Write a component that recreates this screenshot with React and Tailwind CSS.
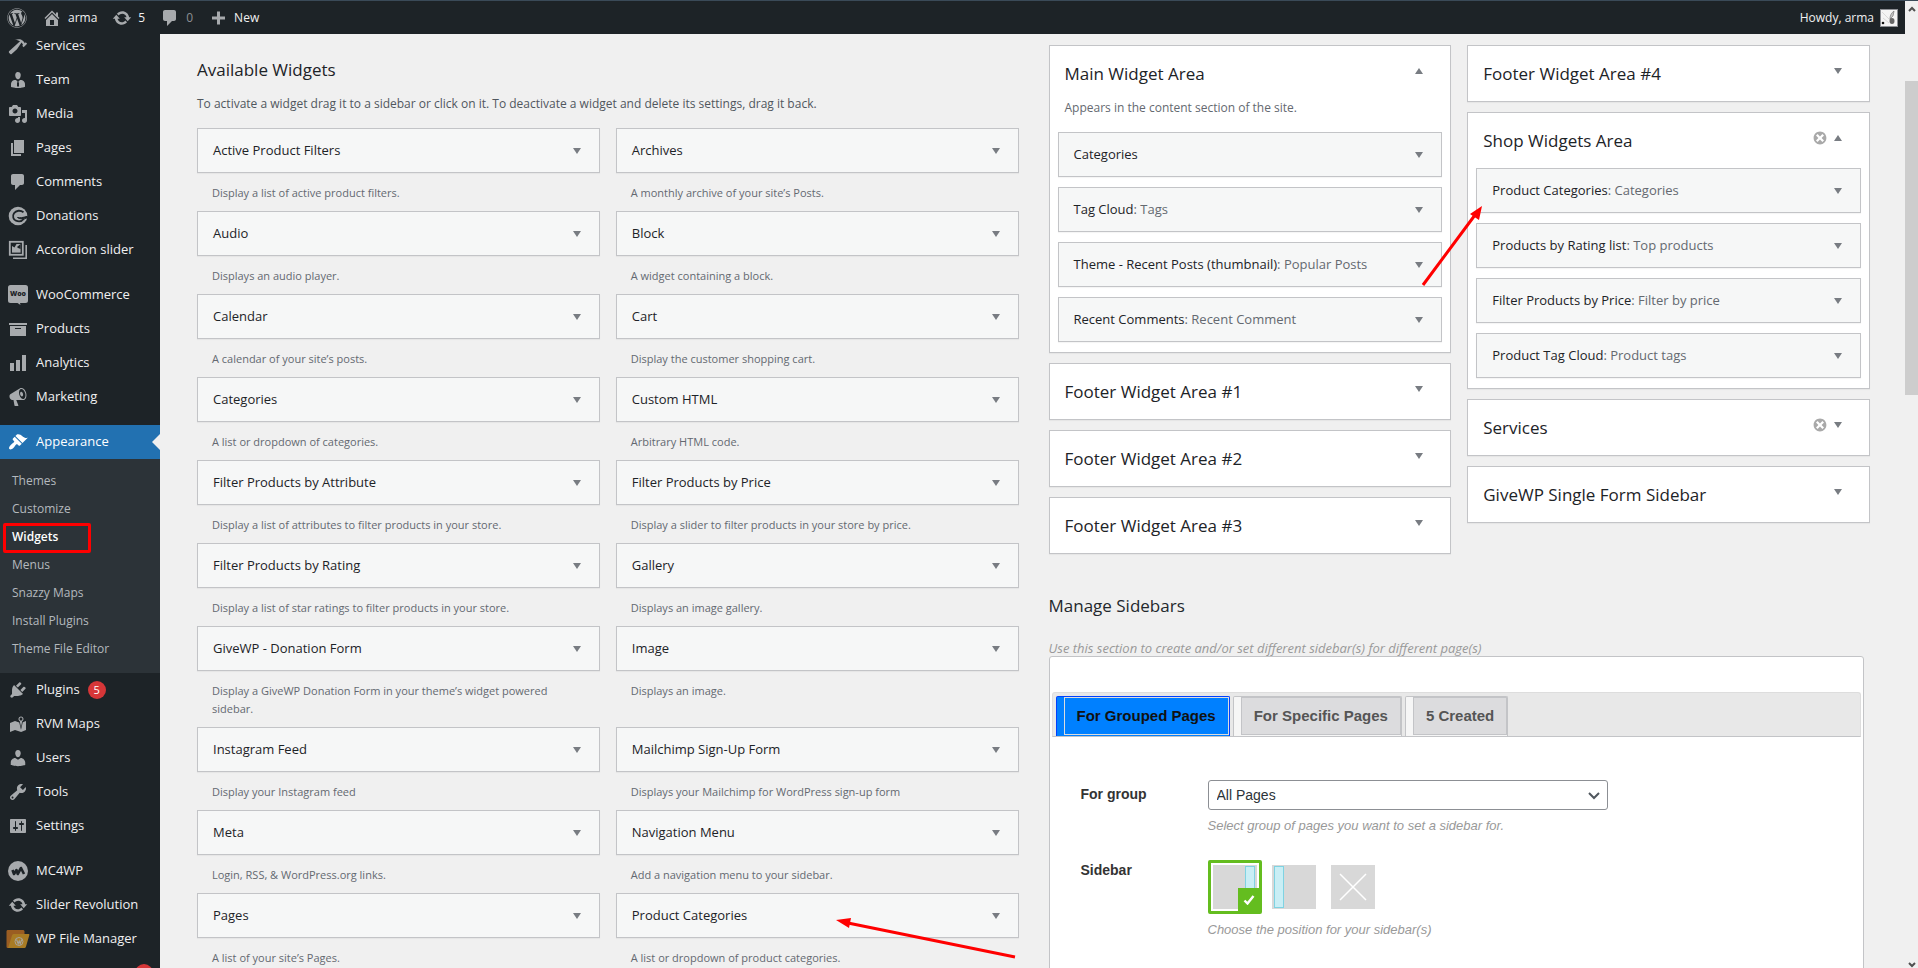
import { FaWordpress } from 'react-icons/fa';

// 20x20 icon shapes used by the admin menu and toolbar
const ICONS = {
  home: 'M16 8.5l1.53 1.53-1.06 1.06L10 4.6l-6.47 6.49-1.06-1.06L10 2.5l4 4v-2h2v4zm-6-2.46l6 5.99V18H4v-5.97zM12 17v-5H8v5h4z',
  update: 'M10.2 3.28c3.53 0 6.43 2.61 6.92 6h2.08l-3.5 4-3.5-4h2.32c-.45-1.97-2.21-3.45-4.32-3.45-1.45 0-2.73.71-3.54 1.78L4.95 5.66C6.23 4.2 8.11 3.28 10.2 3.28zm-.4 13.44c-3.52 0-6.43-2.61-6.92-6H.8l3.5-4c1.17 1.33 2.33 2.67 3.5 4H5.48c.45 1.97 2.21 3.45 4.32 3.45 1.45 0 2.73-.71 3.54-1.78l1.71 1.95c-1.28 1.46-3.15 2.38-5.25 2.38z',
  comments: 'M5 2h9c1.1 0 2 .9 2 2v7c0 1.1-.9 2-2 2h-2l-5 5v-5H5c-1.1 0-2-.9-2-2V4c0-1.1.9-2 2-2z',
  plus: 'M17 8.5v3h-5v5H9v-5H4v-3h5v-5h3v5h5z',
  hammer: 'M17.7 6.32l1.41 1.42-3.47 3.41-1.42-1.42.84-.82c-.32-.76-.81-1.57-1.51-2.31l-4.61 6.59-5.26 4.7c-.39.39-1.02.39-1.42 0l-1.2-1.21c-.39-.39-.39-1.02 0-1.41l10.97-9.92c-1.37-.86-3.21-1.46-5.67-1.48 2.7-.82 4.95-.93 6.58-.3 1.7.66 2.82 2.2 3.91 3.58z',
  businessman: 'M7.3 6l-.03-.19c-.04-.37-.05-.73-.03-1.08.02-.36.1-.71.25-1.04.14-.32.31-.61.52-.86s.49-.46.83-.6c.34-.15.72-.23 1.13-.23.69 0 1.26.2 1.71.59s.76.87.91 1.44.18 1.16.09 1.78l-.03.19c-.01.09-.05.25-.11.48-.05.24-.12.47-.2.69-.08.21-.19.45-.34.72-.14.27-.3.49-.47.69-.18.19-.4.34-.67.48-.27.13-.55.19-.86.19s-.59-.06-.87-.19c-.26-.13-.49-.29-.67-.5-.18-.2-.34-.42-.49-.66-.15-.25-.26-.49-.34-.73-.09-.25-.16-.47-.21-.67-.06-.21-.1-.37-.12-.5zm9.2 6.24c.41.7.5 1.41.5 2.14v2.49c0 .03-.12.08-.29.13-.18.04-.42.13-.97.27-.55.12-1.1.24-1.65.34s-1.19.19-1.95.27c-.75.08-1.46.12-2.13.12-.68 0-1.39-.04-2.14-.12-.75-.07-1.4-.17-1.98-.27-.58-.11-1.08-.23-1.56-.34-.49-.11-.8-.21-1.06-.29L3 16.87v-2.49c0-.75.07-1.46.46-2.15s.81-1.25 1.5-1.68C5.66 10.12 7.19 10 8 10l1.67 1.67L9 13v3l1.02 1.08L11 16v-3l-.68-1.33L11.97 10c.77 0 2.2.07 2.9.52.71.45 1.21 1.02 1.63 1.72z',
  media: 'M13 11V4c0-.55-.45-1-1-1h-1.67L9 1H5L3.67 3H2c-.55 0-1 .45-1 1v7c0 .55.45 1 1 1h10c.55 0 1-.45 1-1zM7 4.5c1.38 0 2.5 1.12 2.5 2.5S8.38 9.5 7 9.5 4.5 8.38 4.5 7 5.62 4.5 7 4.5zM14 6h5v10.5c0 1.38-1.12 2.5-2.5 2.5S14 17.88 14 16.5s1.12-2.5 2.5-2.5c.17 0 .34.02.5.05V9h-3V6zm-4 8.05V13h2v3.5c0 1.38-1.12 2.5-2.5 2.5S7 17.88 7 16.5 8.12 14 9.5 14c.17 0 .34.02.5.05z',
  page: 'M6 15V2h10v13H6zm-1 1h8v2H3V5h2v11z',
  archive: 'M19 4v2H1V4h18zM2 7h16v10H2V7zm11 3V9H7v1h6z',
  chart: 'M18 18V2h-4v16h4zm-6 0V7H8v11h4zm-6 0v-8H2v8h4z',
  megaphone: 'M18.15 5.94c.46 1.62.38 3.22-.02 4.48-.42 1.28-1.26 2.18-2.3 2.48-.16.06-.26.06-.4.06-.06.02-.12.02-.18.02-.06.02-.14.02-.22.02h-6.8l2.22 5.5c.02.14-.06.26-.14.34-.08.1-.24.16-.34.16H6.95c-.1 0-.26-.06-.34-.16-.08-.08-.16-.2-.14-.34l-1-5.5H4.25l-.02-.02c-.5.06-1.08-.18-1.54-.62s-.88-1.08-1.06-1.88c-.24-.8-.2-1.56-.02-2.2.18-.62.58-1.08 1.06-1.3l.02-.02 9-5.4c.1-.06.18-.1.24-.16.06-.04.14-.08.24-.12.16-.08.28-.12.5-.18 1.04-.3 2.24.1 3.22.98s1.84 2.24 2.26 3.86zm-2.58 5.98h-.02c.4-.1.74-.34 1.04-.7.58-.7.86-1.76.86-3.04 0-.64-.1-1.3-.28-1.98-.34-1.36-1.02-2.5-1.78-3.24s-1.68-1.1-2.46-.88c-.82.22-1.4.96-1.7 2-.32 1.04-.28 2.36.06 3.72.38 1.36 1 2.5 1.8 3.24.78.74 1.62 1.1 2.48.88zm-2.54-7.08c.22-.04.42-.02.62.04.38.16.76.48 1.02 1s.42 1.2.42 1.78c0 .3-.04.56-.12.8-.18.48-.44.84-.86.94-.34.1-.8-.06-1.14-.4s-.64-.86-.78-1.5c-.18-.62-.12-1.24.02-1.72s.48-.84.82-.94z',
  appearance: 'M14.48 11.06L7.41 3.99l1.5-1.5c.5-.56 2.3-.47 3.51.32 1.21.8 1.43 1.28 2.91 2.1 1.18.64 2.45 1.26 4.45.85zm-.71.71L6.7 4.7 4.93 6.47c-.39.39-.39 1.02 0 1.41l1.06 1.06c.39.39.39 1.03 0 1.42-.6.6-1.43 1.11-2.21 1.69-.35.26-.7.53-1.01.84C1.43 14.23.4 16.08 1.4 17.07c.99 1 2.84-.03 4.18-1.36.31-.31.58-.66.85-1.02.57-.78 1.08-1.61 1.69-2.21.39-.39 1.02-.39 1.41 0l1.06 1.06c.39.39 1.02.39 1.41 0z',
  plugins: 'M13.11 4.36L9.87 7.6 8 5.73l3.24-3.24c.35-.34 1.05-.2 1.56.32.52.51.66 1.21.31 1.55zm-8 1.77l.91-1.12 9.01 9.01-1.19.84c-.71.71-2.63 1.16-3.82 1.16H6.14L4.9 17.26c-.59.59-1.54.59-2.12 0-.59-.58-.59-1.53 0-2.12l1.24-1.24v-3.88c0-1.13.4-3.19 1.09-3.89zm7.26 3.97l3.24-3.24c.34-.35 1.04-.21 1.55.31.52.51.66 1.21.31 1.55l-3.24 3.25z',
  location: 'M13 13.14l1.17-5.94c.79-.43 1.33-1.25 1.33-2.2 0-1.38-1.12-2.5-2.5-2.5S10.5 3.62 10.5 5c0 .95.54 1.77 1.33 2.2zm0-9.64c.83 0 1.5.67 1.5 1.5s-.67 1.5-1.5 1.5-1.5-.67-1.5-1.5.67-1.5 1.5-1.5zm1.72 4.8L18 6.97v9L13.12 18 7 15.97l-5 2v-9l5-2 4.27 1.41 1.73 7.3z',
  users: 'M10 9.25c-2.27 0-2.73-3.44-2.73-3.44C7 4.02 7.82 2 9.97 2c2.16 0 2.98 2.02 2.71 3.81 0 0-.41 3.44-2.68 3.44zm0 2.57L12.72 10c2.39 0 4.52 2.33 4.52 4.53v2.49s-3.65 1.13-7.24 1.13c-3.65 0-7.24-1.13-7.24-1.13v-2.49c0-2.25 1.94-4.48 4.47-4.48z',
  tools: 'M16.68 9.77c-1.34 1.34-3.3 1.67-4.95.99l-5.41 6.52c-.99.99-2.59.99-3.58 0s-.99-2.59 0-3.57l6.52-5.42c-.68-1.65-.35-3.61.99-4.95 1.28-1.28 3.12-1.62 4.72-1.06l-2.89 2.89 2.82 2.82 2.86-2.87c.53 1.58.18 3.39-1.08 4.65zM3.81 16.21c.4.39 1.04.39 1.43 0 .4-.4.4-1.04 0-1.43-.39-.4-1.03-.4-1.43 0-.39.39-.39 1.03 0 1.43z',
  settings: 'M18 16V4c0-.55-.45-1-1-1H3c-.55 0-1 .45-1 1v12c0 .55.45 1 1 1h14c.55 0 1-.45 1-1zM8 11h1c.55 0 1 .45 1 1s-.45 1-1 1H8v1.5c0 .28-.22.5-.5.5s-.5-.22-.5-.5V13H6c-.55 0-1-.45-1-1s.45-1 1-1h1V5.5c0-.28.22-.5.5-.5s.5.22.5.5V11zm5-2h-1c-.55 0-1-.45-1-1s.45-1 1-1h1V5.5c0-.28.22-.5.5-.5s.5.22.5.5V7h1c.55 0 1 .45 1 1s-.45 1-1 1h-1v5.5c0 .28-.22.5-.5.5s-.5-.22-.5-.5V9z',
  dismiss: 'M10 2c4.42 0 8 3.58 8 8s-3.58 8-8 8-8-3.58-8-8 3.58-8 8-8zm5 11l-3-3 3-3-2-2-3 3-3-3-2 2 3 3-3 3 2 2 3-3 3 3z',
};

function Icon({ name, className }) {
  return (
    <svg viewBox="0 0 20 20" fill="currentColor" aria-hidden="true" className={className}>
      <path d={ICONS[name]} fillRule={name === 'home' ? 'evenodd' : 'nonzero'} />
    </svg>
  );
}

function GiveIcon() {
  return (
    <svg viewBox="0 0 20 20" aria-hidden="true" className="w-5 h-5 shrink-0">
      <circle cx="10" cy="10" r="9.3" fill="currentColor" />
      <path d="M15.5 6.2C12.500 4 8 4.200 6 7.300c-1.900 3-.7 6.200 2 7.400 2.900 1.200 6.200.3 8-2" fill="none" stroke="#1d2327" strokeWidth="1.800" />
      <path d="M9.500 11.500c2.500.6 5 .2 9.700-1.200v1.500c-3.200 1.500-6.800 1.700-9.700-.3z" fill="#1d2327" stroke="#1d2327" />
    </svg>
  );
}

function AccordionIcon() {
  return (
    <svg viewBox="0 0 20 20" aria-hidden="true" className="w-5 h-5 shrink-0">
      <path d="M5 18.200h13.200V5" fill="none" stroke="currentColor" strokeWidth="1.600" />
      <rect x="1.800" y="1.800" width="13" height="13" fill="none" stroke="currentColor" strokeWidth="1.800" />
      <rect x="4" y="4" width="8.600" height="8.600" fill="currentColor" />
      <path d="M4 4h4.500L6.500 7.500 4 6zM9 7l3.600-3v5L10 8z" fill="#1d2327" />
    </svg>
  );
}

function WooIcon() {
  return (
    <svg viewBox="0 0 20 20" aria-hidden="true" className="w-5 h-5 shrink-0">
      <path d="M2.500 0h15A2.500 2.500 0 0 1 20 2.500v13a2.500 2.500 0 0 1-2.500 2.500H12l.5 2-3-2h-7A2.500 2.500 0 0 1 0 15.500v-13A2.500 2.500 0 0 1 2.500 0z" fill="currentColor" />
      <text x="10" y="11" textAnchor="middle" fontSize="7" fontWeight="900" fill="#1d2327">Woo</text>
    </svg>
  );
}

function MailchimpIcon() {
  return (
    <svg viewBox="0 0 20 20" aria-hidden="true" className="w-5 h-5 shrink-0">
      <circle cx="10" cy="10" r="10" fill="currentColor" />
      <path d="M4.500 9l1.500 4 2.500-4 1.200 4L13 7l3 6" fill="none" stroke="#1d2327" strokeWidth="2.600" strokeLinejoin="round" />
    </svg>
  );
}

function FolderIcon() {
  return (
    <span className="flex w-5 justify-center shrink-0">
      <svg viewBox="0 0 23 20" aria-hidden="true" className="w-6 h-5 shrink-0">
        <path d="M0 2.500C0 1.500.5 1 1.500 1H17l1 1v5L8 19H1.500C.5 19 0 18.500 0 17.500z" fill="#9a5d22" />
        <path d="M5.500 6.500C5.800 5.500 6.500 5 7.500 5H22c.8 0 1 .5.800 1.200l-3.300 11.300c-.3 1-1 1.500-2 1.500H1.500z" fill="#a87b24" />
        <circle cx="12.500" cy="12.500" r="4" fill="none" stroke="#a8a49a" strokeWidth="1" />
        <path d="M10 10.500l1.700 4.200 1-2.700 1 2.700 1.500-4.200" fill="none" stroke="#a8a49a" strokeWidth="1.200" />
      </svg>
    </span>
  );
}

const MENU = [
  [
    { label: 'Services', icon: 'hammer' },
    { label: 'Team', icon: 'businessman' },
    { label: 'Media', icon: 'media' },
    { label: 'Pages', icon: 'page' },
    { label: 'Comments', icon: 'comments' },
    { label: 'Donations', Custom: GiveIcon },
    { label: 'Accordion slider', Custom: AccordionIcon },
  ],
  [
    { label: 'WooCommerce', Custom: WooIcon },
    { label: 'Products', icon: 'archive' },
    { label: 'Analytics', icon: 'chart' },
    { label: 'Marketing', icon: 'megaphone' },
  ],
  [
    { label: 'Appearance', icon: 'appearance', active: true },
    { label: 'Plugins', icon: 'plugins', badge: 5 },
    { label: 'RVM Maps', icon: 'location' },
    { label: 'Users', icon: 'users' },
    { label: 'Tools', icon: 'tools' },
    { label: 'Settings', icon: 'settings' },
  ],
  [
    { label: 'MC4WP', Custom: MailchimpIcon },
    { label: 'Slider Revolution', icon: 'update' },
    { label: 'WP File Manager', Custom: FolderIcon },
  ],
];

const SUBMENU = ['Themes', 'Customize', 'Widgets', 'Menus', 'Snazzy Maps', 'Install Plugins', 'Theme File Editor'];

const AVAILABLE = [
  ['Active Product Filters', 'Display a list of active product filters.'],
  ['Archives', 'A monthly archive of your site’s Posts.'],
  ['Audio', 'Displays an audio player.'],
  ['Block', 'A widget containing a block.'],
  ['Calendar', 'A calendar of your site’s posts.'],
  ['Cart', 'Display the customer shopping cart.'],
  ['Categories', 'A list or dropdown of categories.'],
  ['Custom HTML', 'Arbitrary HTML code.'],
  ['Filter Products by Attribute', 'Display a list of attributes to filter products in your store.'],
  ['Filter Products by Price', 'Display a slider to filter products in your store by price.'],
  ['Filter Products by Rating', 'Display a list of star ratings to filter products in your store.'],
  ['Gallery', 'Displays an image gallery.'],
  ['GiveWP - Donation Form', 'Display a GiveWP Donation Form in your theme’s widget powered sidebar.'],
  ['Image', 'Displays an image.'],
  ['Instagram Feed', 'Display your Instagram feed'],
  ['Mailchimp Sign-Up Form', 'Displays your Mailchimp for WordPress sign-up form'],
  ['Meta', 'Login, RSS, & WordPress.org links.'],
  ['Navigation Menu', 'Add a navigation menu to your sidebar.'],
  ['Pages', 'A list of your site’s Pages.'],
  ['Product Categories', 'A list or dropdown of product categories.'],
];

const MAIN_AREA = [
  ['Categories'],
  ['Tag Cloud', 'Tags'],
  ['Theme - Recent Posts (thumbnail)', 'Popular Posts'],
  ['Recent Comments', 'Recent Comment'],
];

const SHOP_AREA = [
  ['Product Categories', 'Categories'],
  ['Products by Rating list', 'Top products'],
  ['Filter Products by Price', 'Filter by price'],
  ['Product Tag Cloud', 'Product tags'],
];

function Caret({ up }) {
  return (
    <svg viewBox="0 0 8 6" aria-hidden="true" className="w-2 h-[6px] shrink-0 fill-[#787c82]">
      <path d={up ? 'M0 6h8L4 0z' : 'M0 0h8L4 6z'} />
    </svg>
  );
}

function AdminBar() {
  return (
    <header className="relative z-10 flex items-center h-[33px] px-[7px] bg-[#1d2327] text-[#f0f0f1] text-xs">
      <a href="#about" aria-label="About WordPress" className="text-[#a7aaad]">
        <FaWordpress className="w-5 h-5" />
      </a>
      <a href="#site" className="flex items-center gap-[6px] ml-[15px]">
        <Icon name="home" className="w-5 h-5 text-[#a7aaad]" />
        arma
      </a>
      <a href="#updates" className="flex items-center gap-[6px] ml-[15px]">
        <Icon name="update" className="w-5 h-5 text-[#a7aaad]" />
        5
      </a>
      <a href="#comments" className="flex items-center gap-[6px] ml-[15px]">
        <Icon name="comments" className="w-5 h-5 text-[#a7aaad]" />
        <span className="text-[#8c8f94]">0</span>
      </a>
      <a href="#new" className="flex items-center gap-[6px] ml-[15px]">
        <Icon name="plus" className="w-5 h-5 text-[#a7aaad]" />
        New
      </a>
      <a href="#profile" className="flex items-center gap-[6px] ml-auto">
        Howdy, arma
        <svg viewBox="0 0 18 18" aria-hidden="true" className="w-[18px] h-[18px]">
          <rect width="18" height="18" fill="#8c8f94" />
          <rect x="1" y="1" width="16" height="16" fill="#f4f4f4" />
          <path d="M2 3l8 8M3 9l6 5" stroke="#d8d8d8" strokeWidth="1" />
          <path d="M14 2c-3 2-4 5-4 8l3-3z" fill="#c5c5c5" stroke="#777" strokeWidth=".7" />
          <ellipse cx="12" cy="12" rx="2.500" ry="3" fill="#666" />
          <circle cx="3" cy="14" r="1.300" fill="#111" />
        </svg>
      </a>
    </header>
  );
}

function MenuItem({ item }) {
  const { label, icon, Custom, badge, active } = item;
  return (
    <li>
      <a
        href="#menu"
        className={`relative flex items-center gap-2 h-[34px] pl-2 text-[13px] ${
          active ? 'bg-[#2271b1] text-white' : 'text-[#f0f0f1]'
        }`}
      >
        <span className={active ? 'text-white' : 'text-[#a7aaad]'}>
          {Custom ? <Custom /> : <Icon name={icon} className="w-5 h-5" />}
        </span>
        {label}
        {badge && (
          <span className="flex items-center justify-center w-[18px] h-[18px] rounded-full bg-[#d63638] text-white text-[11px]">
            {badge}
          </span>
        )}
        {active && (
          <span className="absolute right-0 top-[9px] border-y-8 border-r-8 border-y-transparent border-r-[#f0f0f0]" />
        )}
      </a>
      {active && (
        <ul className="bg-[#2c3338] pt-2 pb-[10px]">
          {SUBMENU.map((name) => (
            <li key={name} className="relative">
              <a
                href="#submenu"
                className={`flex items-center h-7 pl-3 text-xs ${
                  name === 'Widgets' ? 'font-semibold text-white' : 'text-[#b4b9be]'
                }`}
              >
                {name}
              </a>
              {name === 'Widgets' && (
                <span className="absolute left-[3px] top-0 w-[88px] h-[30px] border-[3px] border-[#ff0000] rounded-[2px]" />
              )}
            </li>
          ))}
        </ul>
      )}
    </li>
  );
}

function Sidebar() {
  return (
    <nav className="flex flex-col gap-[11px] w-40 shrink-0 -mt-[5px] bg-[#1d2327]">
      {MENU.map((group, i) => (
        <ul key={i}>
          {group.map((item) => (
            <MenuItem key={item.label} item={item} />
          ))}
          {i === MENU.length - 1 && (
            <li className="flex items-center justify-end h-[34px] pr-[7px]">
              <span className="w-[18px] h-[18px] rounded-full bg-[#d63638]" />
            </li>
          )}
        </ul>
      ))}
    </nav>
  );
}

function WidgetCard({ title, sub }) {
  return (
    <button
      type="button"
      className="flex items-center justify-between w-full h-[45px] pl-[15px] pr-[18px] border border-[#c3c4c7] bg-[#f6f7f7] shadow-[0_1px_1px_rgba(0,0,0,0.04)] text-[13px] text-left text-[#1d2327]"
    >
      <span>
        {title}
        {sub && <span className="text-[#646970]">: {sub}</span>}
      </span>
      <Caret />
    </button>
  );
}

function Area({ title, note, widgets, removable }) {
  return (
    <section className="border border-[#c3c4c7] bg-white shadow-[0_1px_1px_rgba(0,0,0,0.04)]">
      <div className="flex items-center h-[55px] pl-[15px] pr-[27px]">
        <h3 className="text-[17px] text-[#1d2327]">{title}</h3>
        <div className="flex items-center gap-[6px] ml-auto pb-[6px]">
          {removable && (
            <button type="button" aria-label={`Remove ${title}`} className="text-[#a9a9a9]">
              <Icon name="dismiss" className="w-4 h-4" />
            </button>
          )}
          <button type="button" aria-label={`Toggle ${title}`}>
            <Caret up={Boolean(widgets)} />
          </button>
        </div>
      </div>
      {note && <p className="h-[31px] pl-[15px] text-xs leading-[14px] text-[#646970]">{note}</p>}
      {widgets && (
        <div className="flex flex-col gap-[10px] px-2 pb-[10px]">
          {widgets.map(([name, sub]) => (
            <WidgetCard key={name} title={name} sub={sub} />
          ))}
        </div>
      )}
    </section>
  );
}

function Tab({ children, active }) {
  return (
    <li
      className={`flex h-10 pl-[7px] border border-b-0 rounded-t-[2px] ${
        active ? 'bg-[#0080ff] border-[#0040ff]' : 'bg-[#f6f6f6] border-[#c3c4c7]'
      }`}
    >
      <button
        type="button"
        role="tab"
        aria-selected={Boolean(active)}
        className={`px-3 mb-px border text-[15px] font-bold ${
          active ? 'border-[#dcdcde] text-[#111111]' : 'bg-[#dcdcde] border-[#c3c4c7] text-[#555555]'
        }`}
      >
        {children}
      </button>
    </li>
  );
}

function PositionOption({ label, selected, children }) {
  return (
    <label
      className={`relative block w-[54px] h-[54px] p-[2px] border-[3px] rounded-[2px] ${
        selected ? 'border-[#64bd1f]' : 'border-transparent'
      }`}
    >
      <input type="radio" name="position" aria-label={label} className="sr-only" defaultChecked={selected} />
      <svg viewBox="0 0 44 44" aria-hidden="true" className="w-11 h-11">
        <rect width="44" height="44" fill="#d8d8d8" />
        {children}
      </svg>
      {selected && (
        <span className="absolute -right-px -bottom-px flex items-center justify-center w-[22px] h-6 bg-[#64bd1f]">
          <svg viewBox="0 0 12 10" aria-hidden="true" className="w-3 h-[10px]">
            <path d="M1.500 5.500l3 3 6-7.500" fill="none" stroke="#fff" strokeWidth="2.400" />
          </svg>
        </span>
      )}
    </label>
  );
}

function ManageSidebars() {
  return (
    <section className="mt-10">
      <h2 className="text-[17px] leading-6 text-[#23282d]">Manage Sidebars</h2>
      <p className="mt-[22px] text-[13px] leading-4 italic text-[#999999]">
        Use this section to create and/or set different sidebar(s) for different page(s)
      </p>
      <div className="mr-[6px] px-[2px] pt-[35px] pb-40 border border-[#c3c4c7] rounded-[3px] bg-white font-['Liberation_Sans',Arial,sans-serif]">
        <ul role="tablist" className="flex gap-[3px] h-[45px] pl-[3px] pt-[3px] border border-[#dddddd] border-b-[#c3c4c7] rounded-t-[3px] bg-[#e8e8e8]">
          <Tab active>For Grouped Pages</Tab>
          <Tab>For Specific Pages</Tab>
          <Tab>5 Created</Tab>
        </ul>
        <form className="grid grid-cols-[127px_1fr] gap-y-[26px] pt-[43px] pl-[29px] text-sm text-[#333333]">
          <label htmlFor="group" className="pt-1 leading-5 font-bold">For group</label>
          <div>
            <div className="relative w-[400px]">
              <select id="group" className="w-full h-[30px] pl-2 pr-8 appearance-none border border-[#8c8f94] rounded-[3px] bg-white text-sm text-[#2c3338]">
                <option>All Pages</option>
              </select>
              <svg viewBox="0 0 12 8" aria-hidden="true" className="absolute right-2 top-3 w-3 h-2">
                <path d="M1 1l5 5 5-5" fill="none" stroke="#50575e" strokeWidth="2" />
              </svg>
            </div>
            <p className="mt-2 text-[13px] leading-4 italic text-[#999999]">
              Select group of pages you want to set a sidebar for.
            </p>
          </div>
          <span className="leading-5 font-bold">Sidebar</span>
          <div>
            <div role="radiogroup" aria-label="Sidebar" className="flex gap-[5px]">
              <PositionOption label="Right" selected>
                <rect x="32.500" y="1.500" width="9" height="41" fill="#c9eef5" stroke="#7fd3e2" />
              </PositionOption>
              <PositionOption label="Left">
                <rect x="2.500" y="1.500" width="9" height="41" fill="#c9eef5" stroke="#7fd3e2" />
              </PositionOption>
              <PositionOption label="None">
                <path d="M9 9l26 26M35 9L9 35" stroke="#fff" strokeWidth="1.500" />
              </PositionOption>
            </div>
            <p className="mt-2 text-[13px] leading-4 italic text-[#999999]">Choose the position for your sidebar(s)</p>
          </div>
        </form>
      </div>
    </section>
  );
}

// Browser scrollbar on the right edge
function Scrollbar() {
  return (
    <div className="flex flex-col items-center w-[13px] shrink-0 h-full bg-[#f0f0f0]">
      <svg viewBox="0 0 8 6" aria-hidden="true" className="w-2 h-[6px] mt-[5px] mb-[69px] shrink-0">
        <path d="M1 5l3-3 3 3" fill="none" stroke="#505050" strokeWidth="2" />
      </svg>
      <div className="w-full h-[314px] shrink-0 bg-[#cdcdcd]" />
      <svg viewBox="0 0 8 6" aria-hidden="true" className="w-2 h-[6px] mt-auto shrink-0">
        <path d="M1 1l3 3 3-3" fill="none" stroke="#505050" strokeWidth="2" />
      </svg>
    </div>
  );
}

// Red arrows drawn over the page
function Arrows() {
  return (
    <svg aria-hidden="true" className="absolute inset-0 z-20 w-full h-full pointer-events-none">
      <path d="M1423 285l52-70M1015 957L848 923" stroke="#ff0000" strokeWidth="3" />
      <path d="M1482 206l-3 14-9-6zM836 920l15-2-2 10z" fill="#ff0000" />
    </svg>
  );
}

export default function App() {
  return (
    <div className="relative flex flex-col h-screen overflow-hidden bg-[#f0f0f0] font-['Segoe_UI','Open_Sans',sans-serif]">
      <div className="h-px shrink-0 bg-[#3a4a58]" />
      <div className="flex flex-1 min-h-0">
        <div className="flex flex-col flex-1 min-w-0 bg-[#1d2327]">
          <AdminBar />
          <div className="flex flex-1 min-h-0">
            <Sidebar />
            <main className="grid grid-cols-2 gap-x-[30px] flex-1 pl-[37px] pr-[35px] bg-[#f0f0f0] items-start">
              <section className="pt-6">
                <h2 className="text-[17px] leading-6 text-[#1d2327]">Available Widgets</h2>
                <p className="mt-3 text-xs leading-5 text-[#50575e]">
                  To activate a widget drag it to a sidebar or click on it. To deactivate a widget and delete its settings, drag it back.
                </p>
                <div className="grid grid-cols-2 gap-x-4 mt-[14px]">
                  {AVAILABLE.map(([title, text]) => (
                    <div key={title}>
                      <WidgetCard title={title} />
                      <p className="pt-[11px] pb-[9px] px-[15px] text-[11px] leading-[18px] text-[#646970]">{text}</p>
                    </div>
                  ))}
                </div>
              </section>

              <div className="pt-[11px]">
                <div className="grid grid-cols-2 gap-x-4 items-start">
                  <div className="flex flex-col gap-[10px]">
                    <Area title="Main Widget Area" note="Appears in the content section of the site." widgets={MAIN_AREA} />
                    <Area title="Footer Widget Area #1" />
                    <Area title="Footer Widget Area #2" />
                    <Area title="Footer Widget Area #3" />
                  </div>
                  <div className="flex flex-col gap-[10px]">
                    <Area title="Footer Widget Area #4" />
                    <Area title="Shop Widgets Area" widgets={SHOP_AREA} removable />
                    <Area title="Services" removable />
                    <Area title="GiveWP Single Form Sidebar" />
                  </div>
                </div>
                <ManageSidebars />
              </div>
            </main>
          </div>
        </div>
        <Scrollbar />
      </div>
      <Arrows />
    </div>
  );
}
